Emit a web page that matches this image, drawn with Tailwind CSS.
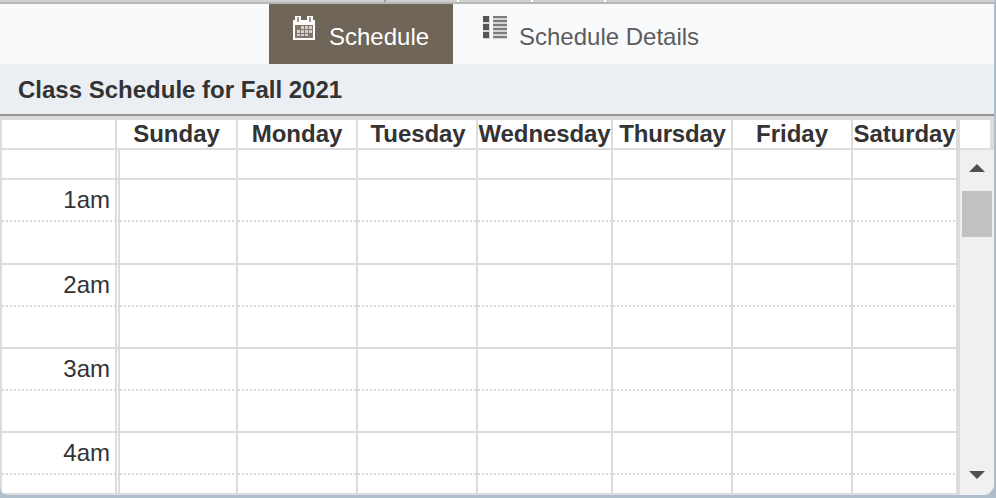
<!DOCTYPE html>
<html lang="en">
<head>
<meta charset="utf-8">
<title>Class Schedule</title>
<script src="https://cdn.jsdelivr.net/npm/@tailwindcss/browser@4"></script>
</head>
<body class="w-[996px] h-[498px] overflow-hidden bg-[#afbdcc] font-['Liberation_Sans',Arial,sans-serif] text-[24px] text-[#333]">
<main class="w-[994px] h-[495px] overflow-hidden rounded-bl-[8px] rounded-br-[11px] bg-[#dcdcdc] flex flex-col">
  <div class="h-1 shrink-0 bg-[#d0d0d0] border-b-2 border-[#b7b7b7] flex">
    <div class="w-[386px] border-r-2 border-[#999]"></div>
    <div class="w-[73px] border-r-2 border-white"></div>
    <div class="w-[74px] border-r-2 border-white"></div>
    <div class="w-[73px] border-r-2 border-white"></div>
  </div>
  <nav class="h-[60px] shrink-0 bg-[#f9fafc] flex pl-[269px]">
    <a class="w-[184px] bg-[#706559] text-white flex pl-6">
      <svg class="mt-3 w-[22px] h-6 shrink-0" viewBox="0 0 22 24" shape-rendering="crispEdges">
        <path fill="#fff" d="M0 4h2V0h6v4h6V0h6v4h2v20H0z"/>
        <path fill="#a39b93" d="M4 1h2v5H4zM16 1h2v5h-2z"/>
        <path fill="#81776d" d="M2 9h18v13H2z"/>
        <path fill="#d3cfcb" d="M8 10h3v3H8zM12 10h3v3h-3zM16 10h3v3h-3zM4 14h3v3H4zM8 14h3v3H8zM12 14h3v3h-3zM16 14h3v3h-3zM4 18h3v2H4zM8 18h3v2H8zM12 18h3v2h-3z"/>
      </svg>
      <span class="ml-[14px] mt-[19px] leading-[28px] whitespace-nowrap">Schedule</span>
    </a>
    <a class="text-[#5c5c5c] flex pl-[30px]">
      <svg class="mt-3 w-6 h-[23px] shrink-0" viewBox="0 0 24 23" shape-rendering="crispEdges">
        <path fill="#d3d4d5" d="M0 0h7v23H0zM10 0h14v23H10z"/>
        <path fill="#555658" d="M0 0h6v6H0zM0 8h6v6H0zM0 16h6v6H0z"/>
        <path fill="#7c7d7f" d="M10 0h14v2H10zM10 4h14v2H10zM10 8h14v2H10zM10 12h14v2H10zM10 16h14v2H10zM10 20h14v2H10z"/>
      </svg>
      <span class="ml-3 mt-[19px] leading-[28px] whitespace-nowrap">Schedule Details</span>
    </a>
  </nav>
  <h1 class="h-[52px] shrink-0 bg-[#ebeff3] border-b-2 border-[#959698] pl-[18px] leading-[52px] font-bold whitespace-nowrap">Class Schedule for Fall 2021</h1>
  <div class="mt-1 h-[28px] shrink-0 grid grid-cols-[113px_119px_118px_118px_133px_118px_118px_103px_30px] gap-x-[2px] pl-[2px] font-bold leading-[28px] text-center whitespace-nowrap [&>div]:bg-white">
    <div></div><div>Sunday</div><div>Monday</div><div class="pl-[2px] tracking-[-0.1px]">Tuesday</div><div class="tracking-[-0.1px]">Wednesday</div><div class="pl-[1px] tracking-[-0.2px]">Thursday</div><div>Friday</div><div class="tracking-[-0.1px]">Saturday</div><div class="ml-[2px] -mr-[2px]"></div>
  </div>
  <div class="mt-[2px] h-[345px] flex">
    <div id="calendar" class="w-[960px] h-[343px] overflow-hidden shrink-0"></div>
    <div class="w-[34px] bg-[#f0f0f0] flex flex-col items-center">
      <svg class="mt-[14px] w-4 h-2 shrink-0" viewBox="0 0 16 8"><path fill="#505050" d="M0 8L8 0l8 8z"/></svg>
      <div class="mt-[19px] w-[30px] h-[46px] shrink-0 bg-[#c1c1c1]"></div>
      <svg class="mt-auto mb-4 w-4 h-2 shrink-0" viewBox="0 0 16 8"><path fill="#505050" d="M0 0h16L8 8z"/></svg>
    </div>
  </div>
</main>
<script>
  // Each entry is one band of the calendar: hour label, height class.
  const rows = [
    ['', 'h-[28px]'], ['1am', 'h-[83px]'], ['2am', 'h-[82px]'],
    ['3am', 'h-[82px]'], ['4am', 'h-[82px]']
  ];
  document.getElementById('calendar').innerHTML = rows.map(([label, height]) => {
    const line = label ? '<div class="mt-[40px] h-[2px] bg-[repeating-linear-gradient(to_right,#d9d9d9_0_2px,#fff_2px_4px)]"></div>' : '';
    const text = label ? '<div class="h-[40px] -mb-[40px] pr-[5px] text-right leading-[40px]">' + label + '</div>' : '';
    const day = '<div class="bg-white overflow-hidden">' + line + '</div>';
    return '<div class="' + height + ' mb-[2px] pl-[2px] grid grid-cols-[113px_1px_116px_118px_118px_133px_118px_118px_103px] gap-x-[2px]">' +
      '<div class="bg-white overflow-hidden">' + text + line + '</div><div class="bg-white -mx-px"></div>'.replace(' -mx-px', '') + day.repeat(7) + '</div>';
  }).join('');
</script>
</body>
</html>
